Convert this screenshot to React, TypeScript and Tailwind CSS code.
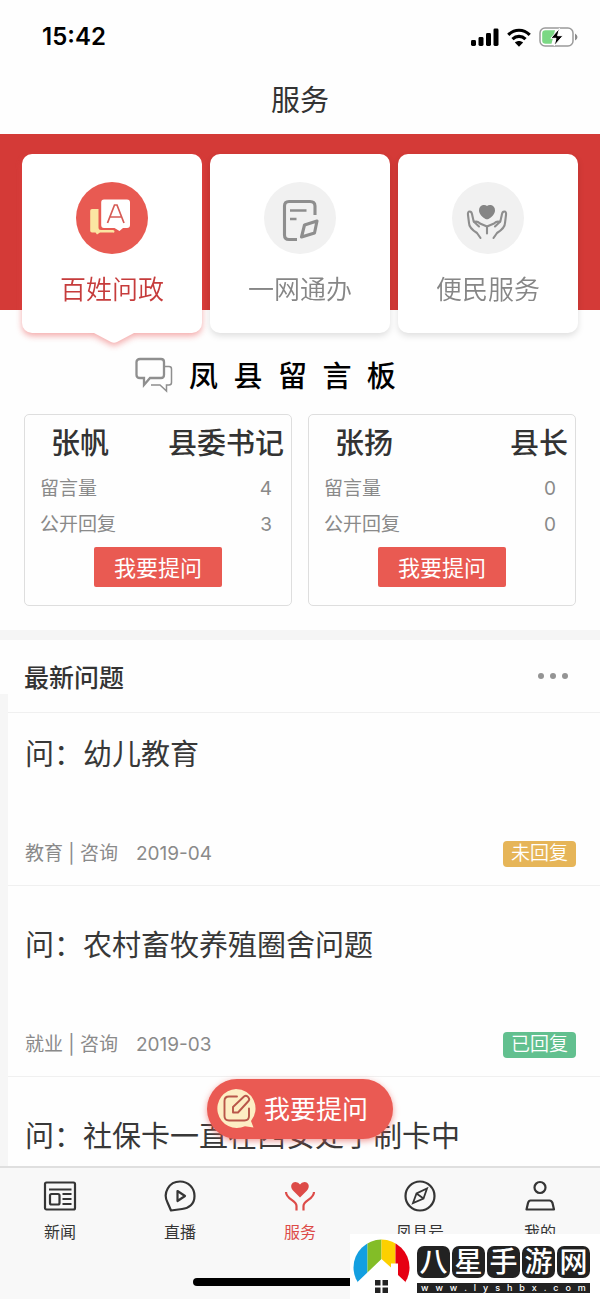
import React from "react";

type TabKey = "ask" | "online" | "service";

const serviceTabs: { key: TabKey; label: string; active?: boolean }[] = [
  { key: "ask", label: "百姓问政", active: true },
  { key: "online", label: "一网通办" },
  { key: "service", label: "便民服务" },
];

const leaders = [
  { name: "张帆", role: "县委书记", messages: 4, replies: 3 },
  { name: "张扬", role: "县长", messages: 0, replies: 0 },
];

type Question = {
  title: string;
  meta?: { topic: string; date: string; replied: boolean };
};

const questions: Question[] = [
  { title: "问：幼儿教育", meta: { topic: "教育 | 咨询", date: "2019-04", replied: false } },
  { title: "问：农村畜牧养殖圈舍问题", meta: { topic: "就业 | 咨询", date: "2019-03", replied: true } },
  { title: "问：社保卡一直在西安处于制卡中" },
];

function StatusBar() {
  return (
    <div className="flex h-[74px] items-center justify-between pl-[42px] pr-[22px]">
      <span className="text-[24px] leading-8 font-semibold text-black">15:42</span>
      <div className="flex items-center gap-2">
        <svg width="28" height="18" viewBox="0 0 28 18" aria-hidden="true">
          <rect x="0" y="12" width="5" height="6" rx="1.4" />
          <rect x="7.5" y="9" width="5" height="9" rx="1.4" />
          <rect x="15" y="5" width="5" height="13" rx="1.4" />
          <rect x="22.5" y="0.5" width="5" height="17.5" rx="1.4" />
        </svg>
        <svg width="24" height="19" viewBox="0 0 24 19" fill="none" stroke="#000" strokeWidth="3.2" aria-hidden="true">
          <path d="M1.3 6.9C7.5 0.7 16.5 0.7 22.7 6.9" />
          <path d="M5.5 11.2C9.3 7.5 14.7 7.5 18.5 11.2" />
          <path d="M12 18.7L7.9 14.6C10.3 12.6 13.7 12.6 16.1 14.6Z" fill="#000" stroke="none" />
        </svg>
        <svg width="39" height="20" viewBox="0 0 39 20" aria-hidden="true">
          <rect x="1" y="1" width="33" height="18" rx="5" fill="#fff" stroke="#9b9b9b" strokeWidth="1.5" />
          <path d="M6.5 3.2H16L12.5 16.8H6.5Q3.2 16.8 3.2 13.5V6.5Q3.2 3.2 6.5 3.2Z" fill="#7bd884" />
          <path d="M20.5 1.2L11.8 11.3H17L15.2 18.8L24 8.7H18.6Z" fill="#000" stroke="#fff" strokeWidth="1" />
          <path d="M36 6.5Q38.500 8 38.5 10T36 13.5Z" fill="#8c8c8c" />
        </svg>
      </div>
    </div>
  );
}

function ServiceIcon({ kind }: { kind: TabKey }) {
  if (kind === "ask") {
    return (
      <svg width="72" height="72" viewBox="0 0 72 72" fill="none" aria-hidden="true">
        <circle cx="36" cy="36" r="36" fill="#e85a52" />
        <path d="M16 27H22.5V45.5Q22.5 48 25 48H37Q38.5 48 38.5 49.5T37 50.5H24L21 52.5L19.5 50.5H16Q14.2 50.5 14.2 48.7V28.8Q14.2 27 16 27Z" fill="#fbe6a2" />
        <path d="M28 17.5H51Q54 17.5 54 20.5V43Q54 46 51 46H47L43.5 49L38.5 46H28Q25.2 46 25.2 43V20.5Q25.2 17.5 28 17.5Z" fill="#fff" />
        <path d="M31.500 41L38.500 23H41L48 41M34 35H45.5" stroke="#d65b55" strokeWidth="1.7" />
      </svg>
    );
  }
  if (kind === "online") {
    return (
      <svg width="72" height="72" viewBox="0 0 72 72" fill="none" stroke="#8e8e8e" strokeWidth="3.1" aria-hidden="true">
        <circle cx="36" cy="36" r="36" fill="#f1f1f1" stroke="none" />
        <path d="M33 57.500H25Q20.500 57.5 20.5 53V24Q20.5 19.5 25 19.5H46Q51 19.500 51 24V33" />
        <path d="M26 28.500H42.5M26 37H32.5" strokeWidth="2.300" />
        <path d="M53 39L50.500 51L37.500 55L40.500 43Z" strokeLinejoin="round" />
      </svg>
    );
  }
  return (
    <svg width="72" height="72" viewBox="0 0 72 72" fill="none" stroke="#8e8e8e" strokeWidth="2.1" strokeLinecap="round" strokeLinejoin="round" aria-hidden="true">
      <circle cx="36" cy="36" r="36" fill="#f1f1f1" stroke="none" />
      <path d="M31 23Q33.500 22.500 35 24Q36.500 22.500 39 23Q43 24 43 28.500C43 32 39.500 35.500 36.500 37Q35 37.500 33.500 37C30.500 35.500 27 32 27 28.500Q27 24 31 23Z" fill="#858585" stroke="none" />
      <path d="M28.500 56L25 51Q17 46 17 41L16 33Q15.500 29.500 17.700 29.500Q19.800 29.500 20.200 33L21.700 39.500L27 44.500M22 40Q25 38.500 28 41.500L35 44.500V51.500" />
      <path d="M41.500 56L45 51Q53 46 53 41L54 33Q54.500 29.500 52.300 29.500Q50.200 29.500 49.800 33L48.300 39.500L43 44.500M48 40Q45 38.500 42 41.500L35 44.500" />
    </svg>
  );
}

function ServiceTabs() {
  return (
    <section className="grid grid-cols-3 gap-2 bg-[linear-gradient(#d43a37_176px,transparent_176px)] px-[22px] pt-5">
      {serviceTabs.map((tab) => (
        <button
          key={tab.key}
          type="button"
          className={
            tab.active
              ? "relative flex flex-col items-center rounded-[10px] bg-white pt-7 pb-6 text-[#c63c3c] drop-shadow-[0_3px_3px_rgba(232,70,70,0.45)]"
              : "relative flex flex-col items-center rounded-[10px] bg-white pt-7 pb-6 text-[#868686] drop-shadow-[0_3px_3px_rgba(0,0,0,0.12)]"
          }
        >
          <ServiceIcon kind={tab.key} />
          <span className="mt-[17px] text-[26px] leading-[38px] font-[350]">{tab.label}</span>
          {tab.active && (
            <svg className="absolute top-full left-1/2 -ml-5" width="44" height="10" viewBox="0 0 44 10" aria-hidden="true">
              <path d="M2 0H42L25 9Q22 10.5 19 9Z" fill="#fff" />
            </svg>
          )}
        </button>
      ))}
    </section>
  );
}

function MessageBoard() {
  return (
    <section className="px-6 pb-6">
      <div className="flex items-center gap-4 pt-[21px] pb-[18px] pl-[111px]">
        <svg width="38" height="36" viewBox="0 0 38 36" fill="none" stroke="#8f8f8f" aria-hidden="true">
          <path d="M5 2H26Q29 2 29 5V18Q29 21 26 21H15L9 28V21H5Q1.5 21 1.5 18V5Q1.500 2 5 2Z" strokeWidth="2.3" />
          <path d="M30 9.5H34Q36.5 9.5 36.5 12V25.5Q36.5 28 34 28H31.5V34L25 28H16" strokeWidth="1.5" />
        </svg>
        <h2 className="pt-1 text-[29px] leading-[38px] font-medium whitespace-pre text-black">凤  县  留  言  板</h2>
      </div>
      <div className="grid grid-cols-2 gap-4">
        {leaders.map((leader) => (
          <article key={leader.name} className="flex flex-col rounded-[5px] border border-[#dedede] px-[15px] pt-1.5 pb-[18px]">
            <div className="-mr-2 flex justify-between pl-[11px] text-[29px] leading-[46px] font-medium text-[#333]">
              <h3>{leader.name}</h3>
              <span>{leader.role}</span>
            </div>
            <dl className="pt-1 pr-1 text-[19px] leading-9 text-[#8a8a8a]">
              <div className="flex justify-between">
                <dt>留言量</dt>
                <dd>{leader.messages}</dd>
              </div>
              <div className="flex justify-between">
                <dt>公开回复</dt>
                <dd>{leader.replies}</dd>
              </div>
            </dl>
            <button type="button" className="mt-1 h-10 self-center rounded-[2px] bg-[#e95a52] px-5 pt-px text-[22px] leading-10 text-white">
              我要提问
            </button>
          </article>
        ))}
      </div>
    </section>
  );
}

function QuestionList() {
  return (
    <section className="border-t-[10px] border-[#f5f5f5]">
      <header className="flex items-center justify-between pt-[18px] pr-8 pl-6">
        <h2 className="pt-1 text-[25px] leading-8 font-medium text-[#333]">最新问题</h2>
        <button type="button" aria-label="更多" className="flex gap-[6px] py-2">
          <i className="size-[6px] rounded-full bg-[#949494]" />
          <i className="size-[6px] rounded-full bg-[#949494]" />
          <i className="size-[6px] rounded-full bg-[#949494]" />
        </button>
      </header>
      <div className="bg-[#f6f6f6] pl-2">
        <div className="bg-[#fefefe] pt-[18px]">
          <ul>
            {questions.map((q) => (
              <li key={q.title} className="border-t border-[#f0f0f0] pt-[38px] pr-6 pb-4 pl-[17px] first:pt-5">
                <h3 className="text-[29px] leading-[44px] whitespace-nowrap text-[#383838]">{q.title}</h3>
                {q.meta && (
                  <div className="mt-[62px] flex items-center text-[19px] leading-[30px] text-[#8a8a8a]">
                    <span>{q.meta.topic}</span>
                    <span className="ml-[18px]">{q.meta.date}</span>
                    <span
                      className={
                        q.meta.replied
                          ? "ml-auto rounded-[4px] bg-[#62c08f] px-2 leading-[26px] font-[350] text-white"
                          : "ml-auto rounded-[4px] bg-[#e6b558] px-2 leading-[26px] font-[350] text-white"
                      }
                    >
                      {q.meta.replied ? "已回复" : "未回复"}
                    </span>
                  </div>
                )}
              </li>
            ))}
          </ul>
        </div>
      </div>
    </section>
  );
}

function NavIcon({ kind }: { kind: string }) {
  const common = { width: 34, height: 34, viewBox: "0 0 34 34", fill: "none", stroke: "currentColor", strokeWidth: 2.2, "aria-hidden": true } as const;
  switch (kind) {
    case "新闻":
      return (
        <svg {...common}>
          <rect x="2" y="3.5" width="30" height="27" rx="1.5" />
          <path d="M6 10.5H28.5M19.5 15H28.5M19.5 20H28.5M19.5 25H28.5" strokeWidth="1.8" />
          <rect x="7" y="15" width="9.5" height="10.5" rx="1.5" />
        </svg>
      );
    case "直播":
      return (
        <svg {...common} strokeLinejoin="round">
          <path d="M8 31.5L4.500 23.5C-0.5 14 6 2.5 17 2.5C25.5 2.5 31.5 9 31.5 17C31.5 25 26 29.5 19 30Z" />
          <path d="M14.5 12L22 17L14.5 22Z" />
        </svg>
      );
    case "服务":
      return (
        <svg {...common}>
          <path d="M17 18.5L10 11.5C6.5 7.5 8.5 3 12.5 3Q15.5 3 17 5.5Q18.5 3 21.5 3C25.5 3 27.5 7.5 24 11.5Z" fill="currentColor" stroke="none" />
          <path d="M3 13C3 20.5 13.5 21 13.5 27V31.5M31 13C31 20.5 20.5 21 20.5 27V31.5" />
        </svg>
      );
    case "凤县号":
      return (
        <svg {...common}>
          <circle cx="17" cy="17" r="14.5" />
          <path d="M24 9.5L20.5 19.5L10 24L13.5 14.5ZM13.5 14.5L20.5 19.5" strokeWidth="1.8" />
        </svg>
      );
    default:
      return (
        <svg {...common} strokeLinejoin="round">
          <circle cx="17" cy="8.5" r="5.5" />
          <path d="M7.500 21.5H26.5Q28.5 21.5 29.5 24L31 30.5H3.5L5 24Q5.8 21.5 7.5 21.5Z" />
        </svg>
      );
  }
}

function BottomNav() {
  const items = ["新闻", "直播", "服务", "凤县号", "我的"];
  return (
    <nav className="relative border-t-2 border-[#dfdfdf] bg-[#f8f8f8] pb-[13px]">
      <div className="grid grid-cols-5 pt-[11px]">
        {items.map((item) => (
          <a
            key={item}
            href="#"
            className={
              item === "服务"
                ? "flex flex-col items-center text-[#dd4b48]"
                : "flex flex-col items-center text-[#353535]"
            }
          >
            <NavIcon kind={item} />
            <span className="mt-[7px] text-[16px] leading-6">{item}</span>
          </a>
        ))}
      </div>
      <div className="mx-auto mt-[34px] h-2 w-[214px] rounded-full bg-black" />
      <SiteBadge />
    </nav>
  );
}

function SiteBadge() {
  return (
    <div className="absolute right-0 bottom-0 flex h-[65px] w-[250px] items-center gap-[7px] bg-white pl-[3px]">
      <svg width="57" height="55" viewBox="0 0 57 55" aria-hidden="true">
        <defs>
          <clipPath id="badge-circle">
            <circle cx="28.5" cy="28.5" r="28" />
          </clipPath>
        </defs>
        <g clipPath="url(#badge-circle)">
          <path d="M0 0H14.5V55H0Z" fill="#139fe0" />
          <path d="M14.5 0H28.5V55H14.5Z" fill="#83bd27" />
          <path d="M28.5 0H42.500V55H28.5Z" fill="#fdd000" />
          <path d="M42.5 0H57V55H42.5Z" fill="#e60012" />
        </g>
        <path d="M28.5 20L38 28.5V24.500H45V36L52.500 43V55H4.500V43Z" fill="#fff" />
        <path d="M22 41H27.5V46.5H22ZM29.5 41H35V46.5H29.5ZM22 48.5H27.5V54H22ZM29.5 48.5H35V54H29.5Z" fill="#222" />
      </svg>
      <div className="flex flex-col gap-[5px] pt-[5px]">
        <div className="flex gap-[2px]">
          {["八", "星", "手", "游", "网"].map((ch) => (
            <span key={ch} className="flex h-8 w-[33px] items-center justify-center rounded-[7px] bg-[#222] text-[28px] leading-8 font-medium text-white">
              {ch}
            </span>
          ))}
        </div>
        <div className="flex h-[10px] justify-between bg-[#222] px-1 text-[9px] leading-[10px] font-medium text-white">
          {"www.lyshbx.com".split("").map((ch, i) => (
            <span key={i}>{ch}</span>
          ))}
        </div>
      </div>
    </div>
  );
}

function AskButton() {
  return (
    <button
      type="button"
      className="absolute bottom-[27px] left-1/2 flex h-[60px] -translate-x-1/2 items-center gap-2 rounded-full bg-[#ea5a53] pr-[25px] pl-[9px] text-[26px] leading-10 whitespace-nowrap text-white shadow-[0_2px_6px_rgba(234,90,83,0.6)]"
    >
      <svg width="40" height="42" viewBox="0 0 40 42" fill="none" aria-hidden="true">
        <path d="M20 1A19.5 19.5 0 1 0 29 38.2L37.5 39.5L35 33A19.5 19.5 0 0 0 20 1Z" fill="#fdeec4" />
        <path d="M21 8.5H13Q8.5 8.5 8.5 13V28Q8.5 32.5 13 32.5H28.5Q33 32.5 33 28V20.5" stroke="#b9574a" strokeWidth="1.9" strokeLinecap="round" />
        <path d="M17 24.5V19L28 8.5Q30 7 31.7 8.7L32.5 9.5Q34 11.3 32.5 13L22 24.5Z" stroke="#b9574a" strokeWidth="1.9" strokeLinejoin="round" />
      </svg>
      <span className="pt-0.5">我要提问</span>
    </button>
  );
}

export default function App() {
  return (
    <div className="flex h-screen flex-col bg-[#fefefe] font-[Inter,'Noto_Sans_CJK_SC',sans-serif]">
      <StatusBar />
      <h1 className="pt-1.5 pb-3 text-center text-[29px] leading-[42px] text-[#333]">服务</h1>
      <div className="relative flex min-h-0 flex-1 flex-col">
        <main className="min-h-0 flex-1 overflow-y-auto [scrollbar-width:none]">
          <ServiceTabs />
          <MessageBoard />
          <QuestionList />
        </main>
        <AskButton />
      </div>
      <BottomNav />
    </div>
  );
}
